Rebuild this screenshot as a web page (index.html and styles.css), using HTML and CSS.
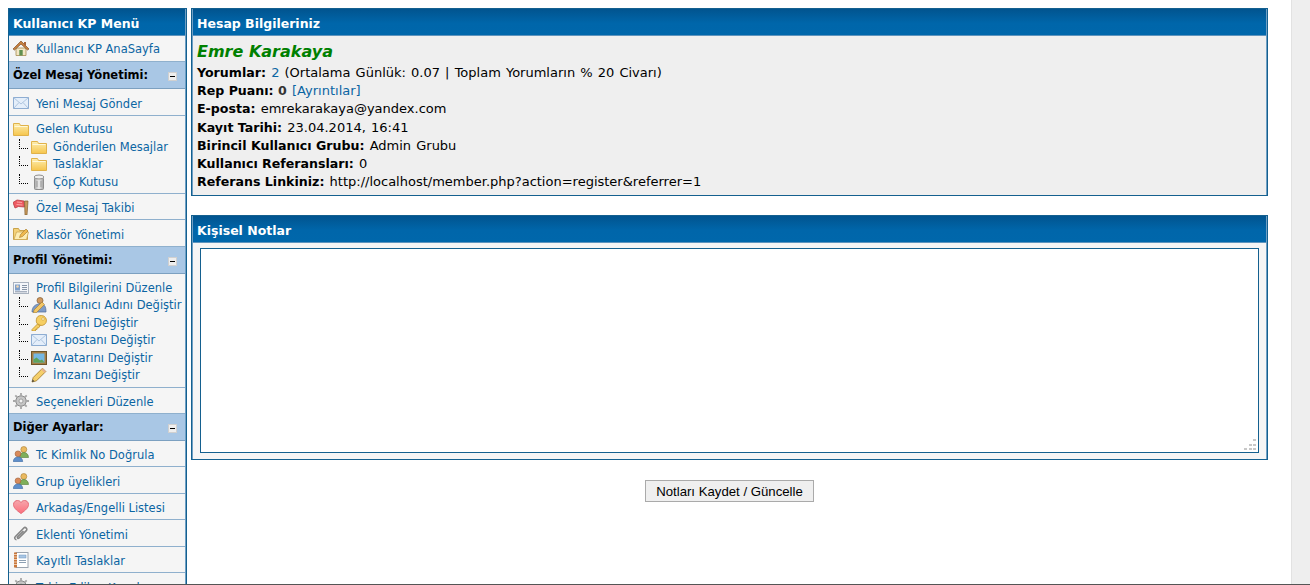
FILE: index.html
```html
<!DOCTYPE html>
<html lang="tr">
<head>
<meta charset="utf-8">
<title>Kullanıcı KP</title>
<link rel="stylesheet" href="styles.css">
</head>
<body>
<svg class="defs" width="0" height="0" aria-hidden="true">
  <defs>
    <linearGradient id="g-fold" x1="0" y1="0" x2="0" y2="1"><stop offset="0" stop-color="#fdeeb0"/><stop offset="1" stop-color="#f6c54c"/></linearGradient>
    <linearGradient id="g-heart" x1="0" y1="0" x2="0" y2="1"><stop offset="0" stop-color="#f6a6ac"/><stop offset="1" stop-color="#fb6f7c"/></linearGradient>
    <linearGradient id="g-can" x1="0" y1="0" x2="1" y2="0"><stop offset="0" stop-color="#a8a8a8"/><stop offset=".5" stop-color="#ececec"/><stop offset="1" stop-color="#a0a0a0"/></linearGradient>
  </defs>
  <symbol id="i-home" viewBox="0 0 16 16"><path d="M3 8h10v7.500H3z" fill="#f2e6c4" stroke="#a58a52" stroke-width=".8"/><path d="M0 9 8 1l8 8-1.500 1L8 4 1.500 10z" fill="#c9803f" stroke="#7f5428" stroke-width=".7"/><path d="M6.300 10h3.400v5.500H6.300z" fill="#5f9050"/><path d="M11 2h2v4.500L11 5z" fill="#a8653a"/></symbol>
  <symbol id="i-mail" viewBox="0 0 16 12"><rect x=".5" y=".5" width="15" height="11" fill="#e4eefa" stroke="#8eadd2"/><path d="M.5.500 8 7l7.500-6.500M.5 11.500 6 5.500M15.500 11.500 10 5.500" fill="none" stroke="#aec5df"/></symbol>
  <symbol id="i-folder" viewBox="0 0 16 14"><path d="M.5 1.500h6l1 2h8v10H.5z" fill="url(#g-fold)" stroke="#e0b24a"/><path d="M1.500 4.500h13" stroke="#fff8d8"/></symbol>
  <symbol id="i-trash" viewBox="0 0 16 16"><rect x="3.500" y="3.500" width="9" height="12" rx="1" fill="url(#g-can)" stroke="#8e8e8e"/><ellipse cx="8" cy="3" rx="4.800" ry="2" fill="#efefef" stroke="#8e8e8e"/><path d="M6 7v6M10 7v6" stroke="#9b9b9b"/></symbol>
  <symbol id="i-flag" viewBox="0 0 16 16"><path d="M0 3.500 4 1l7 1 .5 6-6-.5L2 9z" fill="#ee5a62" stroke="#b83c44" stroke-width=".8"/><path d="M4 3l5 .5M3.500 5.500l6 .5" stroke="#f8a5a5"/><path d="M11.500 2H15l-1 14h-2z" fill="#c99a5c" stroke="#7f5f32" stroke-width=".7"/></symbol>
  <symbol id="i-fedit" viewBox="0 0 16 14"><path d="M.5 2.500h5l1 2h8v9H.5z" fill="#f4d27a" stroke="#c9a24a"/><path d="M1 13.500 3.500 6h12l-2 7.500z" fill="#fdedb4" stroke="#c9a24a" stroke-width=".7"/><path d="m6.500 11.500 1-3L13 3l2 2-5.500 5.500z" fill="#f0b94e" stroke="#a57a2c" stroke-width=".6"/></symbol>
  <symbol id="i-card" viewBox="0 0 16 12"><rect x=".5" y=".5" width="15" height="11" fill="#f4f6fa" stroke="#a9b2bf"/><rect x="2" y="2.500" width="5" height="6" fill="#7f9fc9"/><circle cx="4.500" cy="4.500" r="1.300" fill="#f2d6b0"/><path d="M9 3.500h5M9 5.500h5M9 7.500h5M2 9.800h12" stroke="#8693a5"/></symbol>
  <symbol id="i-user" viewBox="0 0 16 16"><circle cx="9" cy="3.500" r="3" fill="#d29a5e" stroke="#7f5c33" stroke-width=".7"/><path d="M1 15c0-5 3-8 8-8s6 3 6 8z" fill="#7e9cc9" stroke="#4f6b96" stroke-width=".7"/><path d="m3 13 8-8 2.500 2.500-8 8-3 .5z" fill="#f3c766" stroke="#a57a2c" stroke-width=".6"/></symbol>
  <symbol id="i-key" viewBox="0 0 16 16"><path d="M10.500.5a5 5 0 1 1-3.800 8.300L1 14.500V16h3.500v-1.500H6V13h1.500l1.800-2.600A5 5 0 0 1 10.500.5z" fill="#f6cf63" stroke="#c0922f" stroke-width=".8"/><circle cx="12" cy="4" r="1.300" fill="#fff6cf" stroke="#c0922f" stroke-width=".5"/></symbol>
  <symbol id="i-pic" viewBox="0 0 16 14"><rect x=".5" y=".5" width="15" height="13" fill="#a67f45" stroke="#6f5529"/><rect x="2.500" y="2.500" width="11" height="9" fill="#75b7e2"/><path d="M2.500 11.500v-3l3-2 3.500 3 2-1 2.500 3z" fill="#5ea35a"/></symbol>
  <symbol id="i-pen" viewBox="0 0 16 16"><path d="m1 15 1.200-4.500L11.500 1.200l3.300 3.300L5.500 13.800z" fill="#f5cf6a" stroke="#a57f30" stroke-width=".9"/><path d="M1 15l.7-2.500 1.800 1.800z" fill="#444"/><path d="m11.500 1.200 3.300 3.300-1.300 1.300-3.300-3.300z" fill="#e8b090"/></symbol>
  <symbol id="i-gear" viewBox="0 0 16 16"><circle cx="8" cy="8" r="5.200" fill="#c6c6c6" stroke="#8a8a8a"/><circle cx="8" cy="8" r="2" fill="#f4f4f4" stroke="#8a8a8a" stroke-width=".7"/><path d="M8 0v3M8 13v3M0 8h3M13 8h3M2.300 2.300l2.200 2.200M11.500 11.500l2.200 2.200M13.700 2.300l-2.200 2.200M4.500 11.500l-2.200 2.200" stroke="#a8a8a8" stroke-width="1.800"/></symbol>
  <symbol id="i-users" viewBox="0 0 16 16"><circle cx="10.800" cy="3.500" r="3" fill="#eab95f" stroke="#a87c33" stroke-width=".6"/><path d="M6.500 11.500c0-3.500 2-5 4.300-5s4.700 1.500 4.700 5z" fill="#7faf5a" stroke="#557d39" stroke-width=".6"/><circle cx="5" cy="7.800" r="2.900" fill="#d98a5a" stroke="#9e5c34" stroke-width=".6"/><path d="M.3 15.700c0-3 2-4.700 4.700-4.700s4.700 1.700 4.700 4.700z" fill="#5f8fca" stroke="#3f6a9f" stroke-width=".6"/></symbol>
  <symbol id="i-heart" viewBox="0 0 16 14"><path d="M8 13.500C3 10 .5 7.500.5 4.500.5 2 2.500.5 4.500.5 6 .5 7.300 1.300 8 2.500 8.700 1.300 10 .5 11.500.5c2 0 4 1.500 4 4 0 3-2.500 5.500-7.500 9z" fill="url(#g-heart)" stroke="#e56a76"/></symbol>
  <symbol id="i-clip" viewBox="0 0 16 16"><path d="M3.500 14.800c-1.300 0-2.500-1.800-1.300-3L10.800 3c1.500-1.500 4.200.8 2.500 2.600L6 13c-1 1-2.200-.2-1.300-1.200L10.500 6" fill="none" stroke="#858585" stroke-width="1.600"/></symbol>
  <symbol id="i-note" viewBox="0 0 16 16"><rect x="3" y=".5" width="12" height="15" fill="#fff" stroke="#9aa4b0"/><rect x="1" y=".5" width="3" height="15" fill="#c9773a"/><path d="M1 2.500h3M1 5h3M1 7.500h3M1 10h3M1 12.500h3" stroke="#fff" stroke-width=".6"/><rect x="6" y="3" width="7" height="3" fill="#a9c6e4" stroke="#6a93bf" stroke-width=".5"/><path d="M6 8.500h7M6 10.500h7" stroke="#8da0b3"/></symbol>
</svg>
<div class="window">
  <div class="viewport">
    <aside class="menu">
      <h2 class="thead">Kullanıcı KP Menü</h2>
      <a class="row row-home"><svg class="ico"><use href="#i-home"/></svg>Kullanıcı KP AnaSayfa</a>
      <div class="tcat"><b>Özel Mesaj Yönetimi:</b><span class="min"></span></div>
      <a class="row"><svg class="ico"><use href="#i-mail"/></svg>Yeni Mesaj Gönder</a>
      <div class="group g-msg">
        <a class="top"><svg class="ico"><use href="#i-folder"/></svg>Gelen Kutusu</a>
        <a class="sub"><i class="tree"></i><svg class="ico"><use href="#i-folder"/></svg>Gönderilen Mesajlar</a>
        <a class="sub"><i class="tree"></i><svg class="ico"><use href="#i-folder"/></svg>Taslaklar</a>
        <a class="sub"><i class="tree"></i><svg class="ico"><use href="#i-trash"/></svg>Çöp Kutusu</a>
      </div>
      <a class="row"><svg class="ico"><use href="#i-flag"/></svg>Özel Mesaj Takibi</a>
      <a class="row"><svg class="ico"><use href="#i-fedit"/></svg>Klasör Yönetimi</a>
      <div class="tcat"><b>Profil Yönetimi:</b><span class="min"></span></div>
      <div class="group g-prof">
        <a class="top"><svg class="ico"><use href="#i-card"/></svg>Profil Bilgilerini Düzenle</a>
        <a class="sub"><i class="tree"></i><svg class="ico"><use href="#i-user"/></svg>Kullanıcı Adını Değiştir</a>
        <a class="sub"><i class="tree"></i><svg class="ico"><use href="#i-key"/></svg>Şifreni Değiştir</a>
        <a class="sub"><i class="tree"></i><svg class="ico"><use href="#i-mail"/></svg>E-postanı Değiştir</a>
        <a class="sub"><i class="tree"></i><svg class="ico"><use href="#i-pic"/></svg>Avatarını Değiştir</a>
        <a class="sub"><i class="tree"></i><svg class="ico"><use href="#i-pen"/></svg>İmzanı Değiştir</a>
      </div>
      <a class="row"><svg class="ico"><use href="#i-gear"/></svg>Seçenekleri Düzenle</a>
      <div class="tcat"><b>Diğer Ayarlar:</b><span class="min"></span></div>
      <a class="row row-tc"><svg class="ico"><use href="#i-users"/></svg>Tc Kimlik No Doğrula</a>
      <a class="row"><svg class="ico"><use href="#i-users"/></svg>Grup üyelikleri</a>
      <a class="row"><svg class="ico"><use href="#i-heart"/></svg>Arkadaş/Engelli Listesi</a>
      <a class="row"><svg class="ico"><use href="#i-clip"/></svg>Eklenti Yönetimi</a>
      <a class="row"><svg class="ico"><use href="#i-note"/></svg>Kayıtlı Taslaklar</a>
      <a class="row"><svg class="ico"><use href="#i-gear"/></svg>Takip Edilen Konular</a>
    </aside>
    <main class="content">
      <section class="panel info">
        <h2 class="thead">Hesap Bilgileriniz</h2>
        <div class="body">
          <div class="name">Emre Karakaya</div>
          <p><b>Yorumlar:</b> <a>2</a> (Ortalama Günlük: 0.07 | Toplam Yorumların % 20 Civarı)</p>
          <p><b>Rep Puanı: <span class="rep">0</span></b> <span class="bracket">[<a>Ayrıntılar</a>]</span></p>
          <p><b>E-posta:</b> emrekarakaya@yandex.com</p>
          <p><b>Kayıt Tarihi:</b> 23.04.2014, 16:41</p>
          <p><b>Birincil Kullanıcı Grubu:</b> Admin Grubu</p>
          <p><b>Kullanıcı Referansları:</b> 0</p>
          <p><b>Referans Linkiniz:</b> http://localhost/member.php?action=register&amp;referrer=1</p>
        </div>
      </section>
      <section class="panel notes">
        <h2 class="thead">Kişisel Notlar</h2>
        <div class="note-body">
          <textarea class="note-area"></textarea>
          <svg class="grip" width="13" height="12" viewBox="0 0 13 12"><path d="M9 0h3v2H9zM5 5h3v2H5zM9 5h3v2H9zM0 9h3v2H0zM5 9h3v2H5zM9 9h3v2H9z" fill="#c8c8c8"/></svg>
        </div>
      </section>
      <div class="actions"><button class="save" type="button">Notları Kaydet / Güncelle</button></div>
    </main>
    <div class="scroll"></div>
  </div>
  <div class="baseline"></div>
</div>
</body>
</html>
```
FILE: styles.css
```css
* { box-sizing: border-box; }
html, body { margin: 0; height: 585px; overflow: hidden; background: #fff; }
body { font: 12px/18px "DejaVu Sans", Verdana, sans-serif; color: #000; }
.defs { position: absolute; }
.window { height: 585px; display: flex; flex-direction: column; }
.viewport { height: 584px; display: flex; overflow: hidden; }
.baseline { height: 1px; background: #555; }
.scroll { width: 19px; margin-left: 23px; background: #eee; border-left: 1px solid #e2e2e2; }

.menu { width: 179px; margin: 8px 0 0 8px; flex: none; height: 600px; border: 1px solid #14608f; border-bottom: 0; background: #f5f5f5; color: #0b65a3; padding-right: 1px; box-shadow: inset -1px 0 0 #6f9fc4; }
.thead { margin: 0; height: 27px; padding: 0 4px; font-size: 12.5px; line-height: 29px; font-weight: bold; color: #fff; background: linear-gradient(#01548f, #0066aa 55%, #0067ab); border-bottom: 1px solid #5f94bd; white-space: nowrap; }
.row { display: flex; align-items: center; height: 26.4px; padding: 4px 0 0 4px; font-size: 11.5px; border-bottom: 1px solid #8fb0cd; color: #0b65a3; white-space: nowrap; }
.row-home { padding-top: 1px; }
.row-tc { padding-top: 3px; }
.ico { width: 16px; height: 16px; flex: none; margin-right: 7px; margin-top: -3px; }
.tcat { height: 27px; padding: 0 4px; display: flex; justify-content: space-between; background: #a9c7e5; border-bottom: 1px solid #7ca0c0; font-size: 11.5px; line-height: 27px; color: #000; white-space: nowrap; }
.min { width: 9px; height: 9px; margin: 10px 4px 0 0; background: linear-gradient(#000,#000) center/5px 1px no-repeat #eee; border: 1px solid #d0d0d0; }
.group { padding-top: 4px; border-bottom: 1px solid #8fb0cd; font-size: 11.5px; }
.g-msg { height: 78px; }
.g-prof { height: 114px; padding-top: 5px; }
.top, .sub { display: flex; align-items: center; height: 17.5px; white-space: nowrap; color: #0b65a3; }
.top { padding-left: 4px; height: 18px; }
.top .ico, .sub .ico { margin-top: 0; }
.sub { padding-left: 10px; }
.sub .ico { margin-right: 6px; }
.tree { width: 9px; height: 10px; margin: -6px 3px 0 0; flex: none; border-left: 1px dotted #000; border-bottom: 1px dotted #000; }

.content { flex: none; width: 1077px; margin: 8px 0 0 4px; }
.panel { border: 1px solid #14608f; padding: 0 1px 1px; background: #6f9fc4; }
.info { height: 188px; }
.notes { height: 245px; margin-top: 19px; }
.body { height: 159px; padding: 4px 4px 0; font-size: 13px; word-spacing: 1px; background: #efefef; }
.body b { font-size: 12.6px; word-spacing: 0; }
.body p { margin: 0; height: 18.2px; white-space: nowrap; }
.body a, .bracket a { color: #0b65a3; }
.rep { color: #333; }
.bracket { color: #0b65a3; }
.name { height: 24px; font-size: 16px; line-height: 24px; font-weight: bold; font-style: italic; word-spacing: 0; color: #008000; }
.note-body { position: relative; height: 216px; padding: 5px 7px 6px; background: #f5f5f5; }
.note-area { display: block; width: 100%; height: 205px; margin: 0; border: 1px solid #14608f; background: #fff; resize: none; }
.grip { position: absolute; right: 9px; bottom: 8px; }
.actions { margin-top: 20px; text-align: center; }
.save { height: 22px; width: 169px; padding: 0; font: 13.2px "Liberation Sans", Arial, sans-serif; color: #000; background: #efefef; border: 1px solid #aaa; }
```
